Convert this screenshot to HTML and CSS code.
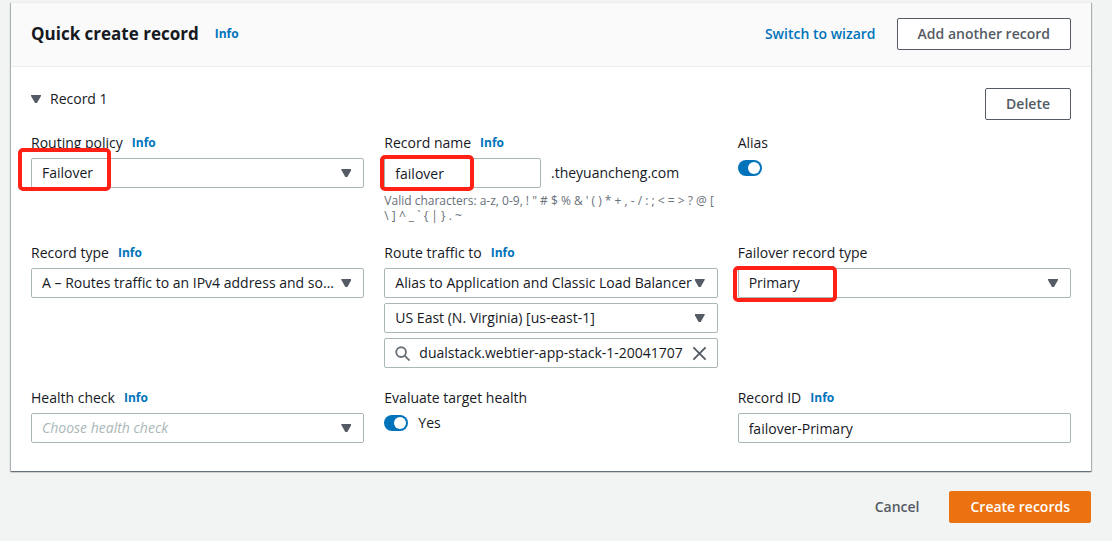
FILE: index.html
```html
<!DOCTYPE html>
<html lang="en">
<head>
<meta charset="utf-8">
<meta name="viewport" content="width=device-width, initial-scale=1">
<title>Quick create record</title>
<link rel="stylesheet" href="styles.css">
</head>
<body>
<form class="page">
  <section class="panel">
    <header class="panel-header">
      <h1 class="title">Quick create record</h1>
      <a class="info info-title" href="#">Info</a>
      <a class="switch-link" href="#">Switch to wizard</a>
      <button class="button" type="button">Add another record</button>
    </header>
    <div class="panel-body">
      <div class="record-header">
        <button class="expander" type="button" aria-expanded="true"><span class="arrow"></span>Record 1</button>
        <button class="button" type="button">Delete</button>
      </div>
      <div class="fields">
        <div class="field">
          <div class="label-row"><label for="policy">Routing policy</label><a class="info" href="#">Info</a></div>
          <div class="control">
            <select class="input select" id="policy"><option>Failover</option></select>
            <span class="arrow select-arrow"></span>
            <span class="mark mark-policy"></span>
          </div>
        </div>
        <div class="field">
          <div class="label-row"><label for="name">Record name</label><a class="info" href="#">Info</a></div>
          <div class="control name-row">
            <input class="input name-input" id="name" type="text" value="failover">
            <span>.theyuancheng.com</span>
            <span class="mark mark-name"></span>
          </div>
          <p class="hint">Valid characters: a-z, 0-9, ! " # $ % &amp; ' ( ) * + , - / : ; &lt; = &gt; ? @ [ \ ] ^ _ ` { | } . ~</p>
        </div>
        <div class="field">
          <div class="label-row"><label for="alias">Alias</label></div>
          <div class="toggle-row"><input class="toggle" id="alias" type="checkbox" role="switch" checked></div>
        </div>

        <div class="field">
          <div class="label-row"><label for="type">Record type</label><a class="info" href="#">Info</a></div>
          <div class="control">
            <select class="input select" id="type"><option>A – Routes traffic to an IPv4 address and some AWS resources</option></select>
            <span class="arrow select-arrow"></span>
          </div>
        </div>
        <div class="field">
          <div class="label-row"><label for="target">Route traffic to</label><a class="info" href="#">Info</a></div>
          <div class="stack">
            <div class="control">
              <select class="input select" id="target"><option>Alias to Application and Classic Load Balancer</option></select>
              <span class="arrow select-arrow"></span>
            </div>
            <div class="control">
              <select class="input select" aria-label="Region"><option>US East (N. Virginia) [us-east-1]</option></select>
              <span class="arrow select-arrow"></span>
            </div>
            <div class="input search">
              <svg class="icon icon-search" viewBox="0 0 16 16" aria-hidden="true"><circle cx="6.5" cy="6.5" r="5.2"/><path d="M10.3 10.3 15.5 15.5"/></svg>
              <input class="search-input" type="text" aria-label="Load balancer" value="dualstack.webtier-app-stack-1-20041707">
              <button class="clear" type="button" aria-label="Clear"><svg class="icon" viewBox="0 0 16 16" aria-hidden="true"><path d="M1.5 1.5 14.5 14.5M14.5 1.5 1.5 14.5"/></svg></button>
            </div>
          </div>
        </div>
        <div class="field">
          <div class="label-row"><label for="failtype">Failover record type</label></div>
          <div class="control">
            <select class="input select" id="failtype"><option>Primary</option></select>
            <span class="arrow select-arrow"></span>
            <span class="mark mark-failtype"></span>
          </div>
        </div>

        <div class="field">
          <div class="label-row"><label for="health">Health check</label><a class="info" href="#">Info</a></div>
          <div class="control">
            <select class="input select placeholder" id="health"><option>Choose health check</option></select>
            <span class="arrow select-arrow"></span>
          </div>
        </div>
        <div class="field">
          <div class="label-row"><label for="evaluate">Evaluate target health</label></div>
          <div class="toggle-row"><input class="toggle" id="evaluate" type="checkbox" role="switch" checked><span>Yes</span></div>
        </div>
        <div class="field">
          <div class="label-row"><label for="recordid">Record ID</label><a class="info" href="#">Info</a></div>
          <input class="input" id="recordid" type="text" value="failover-Primary">
        </div>
      </div>
    </div>
  </section>
  <footer class="actions">
    <button class="button button-link" type="button">Cancel</button>
    <button class="button button-primary" type="submit">Create records</button>
  </footer>
</form>
</body>
</html>
```
FILE: styles.css
```css
* { box-sizing: border-box; }

body {
  margin: 0;
  background: #f2f3f3;
  color: #16191f;
  font: 14px/22px "Open Sans", "Noto Sans", sans-serif;
}

.page { padding: 2px 21px 18px 11px; }

.panel {
  background: #fff;
  border-top: 1px solid #eaeded;
  box-shadow: 0 1px 1px #687078, 1px 1px 1px #b8bebe, -1px 1px 1px #b8bebe;
}

.panel-header {
  display: flex;
  align-items: center;
  padding: 15px 20px 16px;
  background: #fafafa;
  border-bottom: 1px solid #eaeded;
}

.title { margin: 0; font-size: 17px; line-height: 22px; font-weight: 700; }

a { color: #0073bb; text-decoration: none; }
.info { margin-left: 9px; font-size: 12px; font-weight: 700; }
.info-title { margin-left: 16px; }
.switch-link { margin: 0 21px 0 auto; font-weight: 600; }

.button {
  height: 32px;
  padding: 0 20px;
  border: 1px solid #545b64;
  border-radius: 2px;
  background: #fff;
  color: #545b64;
  font: 600 14px/22px "Open Sans", "Noto Sans", sans-serif;
  white-space: nowrap;
}
.button-link { border-color: transparent; background: transparent; }
.button-primary { border-color: #ec7211; background: #ec7211; color: #fff; }

.panel-body { padding: 21px 20px 28px; }

.record-header {
  display: flex;
  justify-content: space-between;
  align-items: flex-start;
  margin-bottom: 12px;
}

.expander {
  display: flex;
  align-items: center;
  gap: 9px;
  padding: 0;
  border: 0;
  background: none;
  color: inherit;
  font: inherit;
}

.arrow {
  width: 10px;
  height: 8px;
  background: #545b64;
  clip-path: polygon(0 0, 100% 0, 100% 12%, 60% 100%, 40% 100%, 0 12%);
}

.fields {
  display: grid;
  grid-template-columns: repeat(3, minmax(0, 1fr));
  gap: 19px 20px;
}

.label-row { display: flex; margin-bottom: 4px; }
.control { position: relative; }

.input {
  display: block;
  width: 100%;
  height: 30px;
  padding: 0 10px;
  border: 1px solid #aab7b8;
  border-radius: 2px;
  background: #fff;
  color: inherit;
  font: inherit;
}

.select { appearance: none; padding-right: 24px; text-overflow: ellipsis; }
.select-arrow { position: absolute; right: 13px; top: 11px; pointer-events: none; }
.placeholder { color: #aab7b8; font-style: italic; }

.name-row { display: flex; align-items: center; gap: 10px; }
.name-input { width: 47%; }

.hint { margin: 5px 0 0; color: #687078; font-size: 12px; line-height: 15px; }

.stack { display: grid; gap: 5px; }

.search { display: flex; align-items: center; gap: 9px; }
.search-input {
  flex: 1;
  min-width: 0;
  padding: 0;
  border: 0;
  background: none;
  color: inherit;
  font: inherit;
}
.clear { display: flex; padding: 0; border: 0; background: none; }
.icon {
  flex: none;
  width: 15px;
  height: 15px;
  fill: none;
  stroke: #545b64;
  stroke-width: 2;
}
.icon-search { stroke: #687078; }

.toggle {
  appearance: none;
  display: flex;
  justify-content: flex-end;
  width: 24px;
  height: 16px;
  margin: 2px 0 0;
  padding: 2px;
  border-radius: 8px;
  background: #0073bb;
}
.toggle::before { content: ""; width: 12px; height: 12px; border-radius: 50%; background: #fff; }
.toggle-row { display: flex; align-items: flex-start; gap: 10px; }
.toggle-row span { line-height: 20px; }

.mark { position: absolute; border: 4px solid #ff2116; border-radius: 5px; pointer-events: none; }
.mark-policy { left: -13px; top: -10px; width: 93px; height: 43px; }
.mark-name { left: -4px; top: -3px; width: 94px; height: 36px; }
.mark-failtype { left: -5px; top: -2px; width: 104px; height: 36px; }

.actions { display: flex; justify-content: flex-end; gap: 9px; margin-top: 20px; }
```
